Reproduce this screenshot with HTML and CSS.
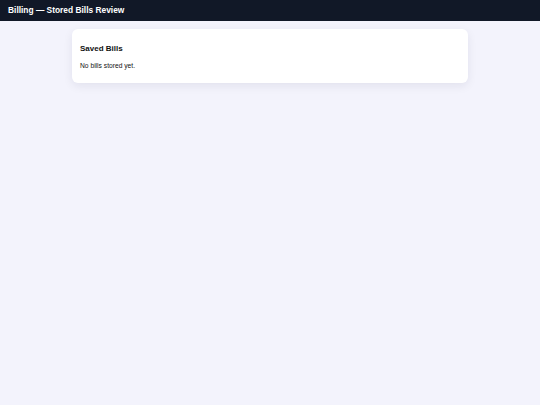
FILE: index.html
```html
<!DOCTYPE html>
<html lang="en">
<head>
<meta charset="utf-8">
<title>Billing — Stored Bills Review</title>
<link rel="stylesheet" href="styles.css">
</head>
<body>
<header class="topbar">
  <h1 class="topbar-title">Billing — Stored Bills Review</h1>
</header>
<main class="content">
  <section class="card">
    <h2 class="card-title">Saved Bills</h2>
    <p class="card-text">No bills stored yet.</p>
  </section>
</main>
</body>
</html>
```

FILE: styles.css
```css
html, body {
  margin: 0;
  padding: 0;
}
body {
  background: #f3f3fc;
  font-family: "Liberation Sans", Arial, sans-serif;
  color: #111;
  min-height: 405px;
}
.topbar {
  background: #111827;
  height: 21px;
  display: flex;
  align-items: center;
  padding: 0 8px;
}
.topbar-title {
  margin: 0;
  color: #fff;
  font-size: 8.4px;
  font-weight: 700;
  line-height: 1;
}
.content {
  padding-top: 8px;
}
.card {
  width: 396px;
  box-sizing: border-box;
  margin: 0 auto;
  background: #fff;
  border-radius: 6px;
  padding: 12px 8px 13.5px;
  box-shadow: 0 3px 10px rgba(30, 30, 60, 0.08);
}
.card-title {
  margin: 2.5px 0 9px;
  font-size: 8px;
  font-weight: 700;
  line-height: 9.2px;
  color: #111;
}
.card-text {
  margin: 0;
  font-size: 6.7px;
  line-height: 7.7px;
  color: #111;
}
```
